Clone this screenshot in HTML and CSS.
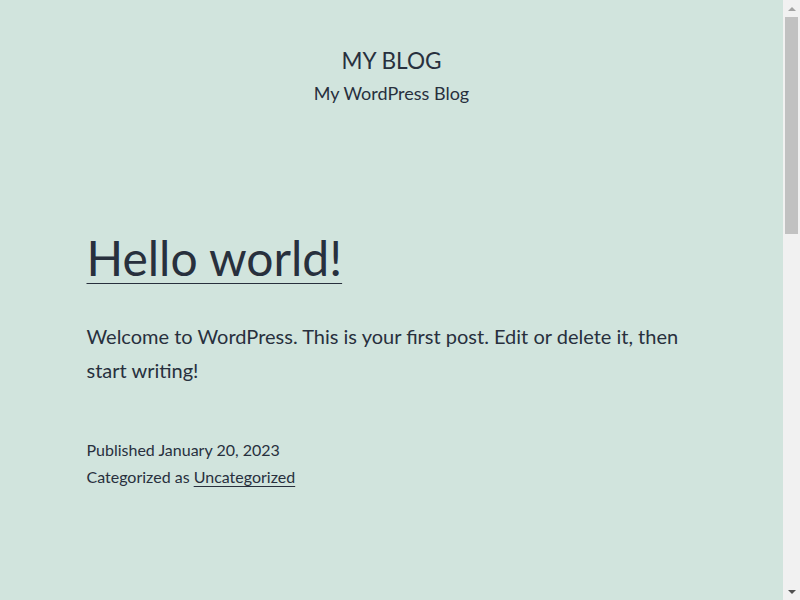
FILE: index.html
```html
<!DOCTYPE html>
<html lang="en">
<head>
    <meta charset="UTF-8">
    <meta name="viewport" content="width=device-width, initial-scale=1.0">
    <title>My Blog</title>
    <link rel="stylesheet" href="styles.css">
</head>
<body>
    <div class="page">
        <header class="site-header">
            <p class="site-title"><a href="#">My Blog</a></p>
            <p class="site-description">My WordPress Blog</p>
        </header>

        <main class="site-main">
            <article class="post">
                <h2 class="entry-title"><a href="#">Hello world!</a></h2>
                <div class="entry-content">
                    <p>Welcome to WordPress. This is your first post. Edit or delete it, then start writing!</p>
                </div>
                <footer class="entry-footer">
                    <span class="posted-on">Published January 20, 2023</span>
                    <span class="cat-links">Categorized as <a href="#">Uncategorized</a></span>
                </footer>
            </article>
        </main>
    </div>

    <!-- fake browser scrollbar -->
    <div class="scrollbar">
        <span class="arrow up"></span>
        <div class="track">
            <div class="thumb"></div>
        </div>
        <span class="arrow down"></span>
    </div>
</body>
</html>
```

FILE: styles.css
```css
html, body {
    height: 100%;
    overflow: hidden;
}

body {
    display: flex;
    margin: 0;
    font-family: "Segoe UI", Lato, "Liberation Sans", sans-serif;
    color: #28303d;
    background-color: #d1e4dd;
}

a {
    color: #28303d;
}

.page {
    flex: 1;
    min-width: 0;
}

.site-header {
    padding-top: 46px;
    text-align: center;
}

.site-title {
    margin: 0;
    font-size: 22.6px;
    line-height: 1.3;
    text-transform: uppercase;
}

    .site-title a {
        text-decoration: none;
    }

.site-description {
    margin: 6px 0 0;
    font-size: 18px;
    line-height: 1.4;
}

.site-main {
    width: 610px;
    margin: 0 auto;
    padding-top: 120px;
}

.entry-title {
    margin: 0;
    font-size: 48px;
    font-weight: 400;
    line-height: 1.3;
}

    .entry-title a {
        text-decoration-thickness: 1px;
        text-underline-offset: 7px;
    }

.entry-content p {
    margin: 30px 0 0;
    font-size: 20px;
    line-height: 1.7;
}

.entry-footer {
    display: flex;
    flex-direction: column;
    margin-top: 49px;
    font-size: 16px;
    line-height: 1.7;
}

    .entry-footer a {
        text-decoration-thickness: 1px;
        text-underline-offset: 3px;
    }

.scrollbar {
    display: flex;
    flex-direction: column;
    width: 17px;
    background-color: #f1f1f1;
}

.arrow {
    display: flex;
    justify-content: center;
    align-items: center;
    height: 17px;
}

    .arrow::before {
        content: "";
        border-left: 4px solid transparent;
        border-right: 4px solid transparent;
    }

    .arrow.up::before {
        border-bottom: 4px solid #a3a3a3;
    }

    .arrow.down::before {
        border-top: 4px solid #505050;
    }

.track {
    flex: 1;
    padding: 0 2px;
}

.thumb {
    height: 217px;
    background-color: #c1c1c1;
}
```
